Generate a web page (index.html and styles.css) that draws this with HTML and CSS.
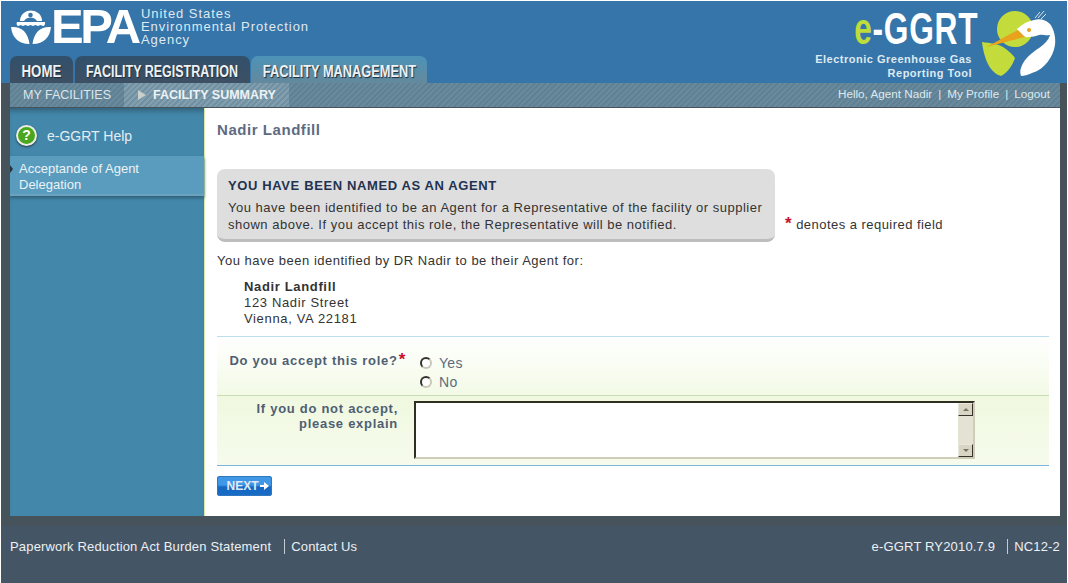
FILE: index.html

```html
<!DOCTYPE html>
<html lang="en">
<head>
  <meta charset="UTF-8" />
  <title>e-GGRT</title>
  <link rel="stylesheet" href="styles.css">
</head>
<body>
  <div class="frame">
    <header class="masthead">
      <div class="masthead-left">
        <div class="epa">
          <svg class="epa-mark" viewBox="0 0 50 44" width="50" height="44">
            <path d="M14 17a11 10.500 0 0 1 22 0z" fill="#fff"/>
            <circle cx="24.500" cy="11" r="2.300" fill="#3575a9"/>
            <path d="M18 17c2-3 4-3.500 6.500-3.500s4.500.5 6.500 3.500z" fill="#3575a9"/>
            <path d="M11 18h28c.5 2-.5 4-2 4l-2.500-1-2.500 1-2.500-1-2.500 1-2.500-1-2.500 1-2.500-1-2.500 1-2.500-1-2 1c-1.500 0-2.500-2-1.500-4z" fill="#fff"/>
            <path d="M5 23c9-1 17 4 18.500 17C12 40 6 33 5 23z" fill="#fff"/>
            <path d="M45 23c-9-1-17 4-18.500 17C38 40 44 33 45 23z" fill="#fff"/>
          </svg>
          <span class="epa-word">EPA</span>
          <span class="epa-name">United States<br>Environmental Protection<br>Agency</span>
        </div>
        <nav class="tabs">
          <a class="tab tab-home"><span>HOME</span></a>
          <a class="tab tab-reg"><span>FACILITY REGISTRATION</span></a>
          <a class="tab tab-on"><span>FACILITY MANAGEMENT</span></a>
        </nav>
      </div>
      <div class="masthead-right">
        <div class="ggrt">
          <div class="ggrt-word"><span class="ggrt-e">e</span>-GGRT</div>
          <div class="ggrt-sub">Electronic Greenhouse Gas<br>Reporting Tool</div>
        </div>
        <svg class="heron" viewBox="0 0 84 80" width="84" height="80">
          <circle cx="37" cy="25" r="18" fill="#c3dc3c"/>
          <path d="M4 38c8 1 16 2 21 5 5 3 9 7 12 11-3 8-7 14-14 18C12 69 6 55 4 38z" fill="#c3dc3c"/>
          <path d="M39 25c5-5 11-8 17-9 6-2 12 0 16 4 4 5 6 14 5 21-2 12-10 24-23 28-4 2-8 3-11 3-1-3-1-6 0-8 2-7 8-13 15-18 5-3 10-7 13-12-2-3-6-4-10-3-3 1-7 2-10 2-5 1-9-3-12-8z" fill="#fff"/>
          <path d="M62 32c4 0 8-1 10-1 0 2-2 3-4 4l-6 3z" fill="#3575a9"/>
          <path d="M8 43C18 38 30 31 40 26l7 7c-12 3-26 7-39 10z" fill="#e8a21c"/>
          <circle cx="51" cy="26" r="2" fill="#e8a21c"/>
          <path d="M57 14l5-6M60 14l6-7M63 15l5-5" stroke="#dbe7ee" stroke-width="1" fill="none"/>
        </svg>
      </div>
    </header>

    <div class="subnav">
      <div class="subnav-links">
        <a class="sublink">MY FACILITIES</a>
        <a class="sublink sublink-on"><span class="sub-arrow"></span>FACILITY SUMMARY</a>
      </div>
      <div class="userlinks">Hello, Agent Nadir<i>|</i>My Profile<i>|</i>Logout</div>
    </div>

    <div class="body-wrap">
      <aside class="sidebar">
        <div class="help">
          <span class="help-icon">?</span>
          <span>e-GGRT Help</span>
        </div>
        <a class="side-item">Acceptande of Agent Delegation</a>
      </aside>

      <main class="content">
        <h1 class="page-title">Nadir Landfill</h1>

        <div class="notice-row">
          <div class="notice">
            <h2>YOU HAVE BEEN NAMED AS AN AGENT</h2>
            <p>You have been identified to be an Agent for a Representative of the facility or supplier shown above. If you accept this role, the Representative will be notified.</p>
          </div>
          <div class="req-note"><span class="star">*</span> denotes a required field</div>
        </div>

        <p class="intro">You have been identified by DR Nadir to be their Agent for:</p>

        <div class="address">
          <b>Nadir Landfill</b><br>
          123 Nadir Street<br>
          Vienna, VA 22181
        </div>

        <form class="agent-form">
          <div class="form-row row-role">
            <div class="form-label">Do you accept this role?<span class="star star-over">*</span></div>
            <div class="radios">
              <label><input type="radio" name="accept"> Yes</label>
              <label><input type="radio" name="accept"> No</label>
            </div>
          </div>
          <div class="form-row row-explain">
            <div class="form-label">If you do not accept,<br>please explain</div>
            <div class="textbox">
              <textarea></textarea>
              <div class="scroll">
                <span class="scroll-btn"><span class="tri-up"></span></span>
                <span class="scroll-btn"><span class="tri-down"></span></span>
              </div>
            </div>
          </div>
          <button type="button" class="next">NEXT<svg viewBox="0 0 9 8" width="9" height="8"><path d="M0 3h4V0l5 4-5 4V5H0z" fill="#fff"/></svg></button>
        </form>
      </main>
    </div>

    <footer class="footer">
      <div class="foot-links"><a>Paperwork Reduction Act Burden Statement</a><a class="foot-sep foot-sep-left">Contact Us</a></div>
      <div class="foot-links"><a>e-GGRT RY2010.7.9</a><a class="foot-sep">NC12-2</a></div>
    </footer>
  </div>
</body>
</html>
```

FILE: styles.css

```css
html, body {
  margin: 0;
  padding: 0;
  background: #fff;
}
body {
  font-family: "Liberation Sans", Arial, sans-serif;
  font-size: 12px;
  color: #333;
  overflow: hidden;
}
.frame {
  width: 1066px;
  height: 582px;
  margin: 1px 0 0 1px;
  background: #46535b;
  display: flex;
  flex-direction: column;
}

/* masthead */
.masthead {
  height: 82px;
  background: #3575a9;
  display: flex;
  justify-content: space-between;
}
.masthead-left {
  display: flex;
  flex-direction: column;
  justify-content: space-between;
  padding-left: 9px;
}
.epa {
  display: flex;
  align-items: flex-start;
  padding-top: 3px;
  color: #fff;
}
.epa-mark {
  margin: 0 -5px 0 -4px;
}
.epa-word {
  font-size: 49px;
  font-weight: bold;
  line-height: 36px;
  letter-spacing: -3.5px;
  width: 90px;
  margin-top: 4px;
}
.epa-name {
  font-size: 13px;
  line-height: 13px;
  letter-spacing: 0.95px;
  color: #dfe9f1;
  margin-top: 3px;
}
.tabs {
  display: flex;
  gap: 2px;
}
.tab {
  height: 27px;
  box-sizing: border-box;
  padding-top: 4px;
  display: flex;
  align-items: center;
  justify-content: center;
  background: linear-gradient(#31506b, #3e5064);
  border-radius: 7px 7px 0 0;
  font-size: 15.6px;
  font-weight: bold;
  color: #eef2f5;
  text-shadow: 1px 1px 1px #1d2b38;
}
.tab span {
  flex-shrink: 0;
  white-space: nowrap;
  transform: scaleX(0.8);
}
.tab-home {
  width: 63px;
}
.tab-home span {
  transform: scaleX(0.85);
}
.tab-reg {
  width: 175px;
}
.tab-on {
  width: 176px;
  margin-left: -1px;
  background: linear-gradient(#4c93b8, #64899c);
}
.tab-on span {
  transform: scaleX(0.82);
}
.masthead-right {
  display: flex;
  padding-right: 5px;
}
.ggrt {
  text-align: right;
  padding-top: 8px;
}
.ggrt-word {
  font-weight: bold;
  font-size: 44px;
  line-height: 40px;
  letter-spacing: 1px;
  color: #fff;
  transform: scaleX(0.72);
  transform-origin: right center;
}
.ggrt-e {
  color: #bedc3a;
}
.ggrt-sub {
  font-size: 11px;
  font-weight: bold;
  line-height: 14px;
  letter-spacing: 0.5px;
  color: #dfe9f1;
  margin: 3px 6px 0 0;
}
.heron {
  margin-top: 3px;
}

/* second nav row */
.subnav {
  height: 24px;
  margin: 0 7px 0 9px;
  padding-right: 10px;
  background: repeating-linear-gradient(135deg, #6a8a9b 0 2px, #5f8195 2px 4px);
  border-bottom: 1px solid #46535b;
  display: flex;
  justify-content: space-between;
  align-items: center;
}
.subnav-links {
  display: flex;
  height: 100%;
}
.sublink {
  font-size: 12.5px;
  line-height: 25px;
  color: #dbe6ec;
  padding: 0 13px;
}
.sublink-on {
  font-weight: bold;
  padding: 0 13px 0 14px;
  background: repeating-linear-gradient(135deg, #839fae 0 2px, #6f91a3 2px 4px);
  display: flex;
  align-items: center;
  gap: 7px;
  color: #edf2f5;
}
.sub-arrow {
  width: 0;
  height: 0;
  border-left: 8px solid #c9cfc9;
  border-top: 5px solid transparent;
  border-bottom: 5px solid transparent;
}
.userlinks {
  font-size: 11.7px;
  color: #dde9ef;
  margin-top: -3px;
}
.userlinks i {
  font-style: normal;
  margin: 0 6px;
}

/* body */
.body-wrap {
  height: 408px;
  margin: 0 7px 10px 9px;
  display: flex;
}
.sidebar {
  width: 194px;
  background: #4387aa;
  border-right: 1px solid #d6e8a8;
  box-shadow: inset 0 6px 5px -3px #34637c;
  flex-shrink: 0;
}
.help {
  height: 48px;
  box-sizing: border-box;
  padding: 7px 0 0 6px;
  display: flex;
  align-items: center;
  gap: 10px;
  font-size: 14px;
  color: #e2edf2;
}
.help-icon {
  width: 17px;
  height: 17px;
  border-radius: 50%;
  background: #4aa61c;
  border: 2px solid #e8efe6;
  color: #fff;
  font-size: 14px;
  font-weight: bold;
  line-height: 17px;
  text-align: center;
  box-shadow: 0 1px 2px #234;
}
.side-item {
  display: block;
  position: relative;
  padding: 5px 20px 1px 9px;
  font-size: 13px;
  line-height: 16px;
  color: #eaf2f6;
  background: #5a9cbe;
  border-bottom: 2px solid #6ba2bd;
  box-shadow: 0 2px 3px #2f5f78;
}
.side-item::before {
  content: "";
  position: absolute;
  left: 0;
  top: 9px;
  border-left: 3px solid #26333c;
  border-top: 4px solid transparent;
  border-bottom: 4px solid transparent;
}
.content {
  flex: 1;
  background: #fff;
  padding: 0 11px 0 12px;
}
.page-title {
  margin: 14px 0 0;
  font-size: 15px;
  line-height: 16px;
  letter-spacing: 0.55px;
  color: #5d6b82;
}
.notice-row {
  display: flex;
  align-items: flex-end;
  margin-top: 31px;
}
.notice {
  width: 558px;
  height: 73px;
  box-sizing: border-box;
  padding: 8px 10px 0 11px;
  background: #dedede;
  border-radius: 8px;
  border-bottom: 3px solid #bdbdbd;
}
.notice h2 {
  margin: 0;
  font-size: 13px;
  line-height: 17px;
  letter-spacing: 0.62px;
  color: #1f3350;
}
.notice p {
  margin: 5px 0 0;
  font-size: 13px;
  line-height: 17px;
  letter-spacing: 0.5px;
}
.req-note {
  margin-left: 10px;
  padding-bottom: 8px;
  font-size: 13px;
  letter-spacing: 0.46px;
  color: #333;
}
.star {
  color: #c8102e;
  font-weight: bold;
  font-size: 17px;
}
.star-over {
  margin-right: -8px;
  margin-left: 1px;
}
.intro {
  margin: 11px 0 0;
  font-size: 13px;
  line-height: 16px;
  letter-spacing: 0.5px;
}
.address {
  margin: 10px 0 0 27px;
  font-size: 13px;
  line-height: 16px;
  letter-spacing: 0.65px;
}
.agent-form {
  margin-top: 9px;
}
.form-row {
  display: flex;
}
.form-label {
  width: 181px;
  font-size: 13px;
  font-weight: bold;
  line-height: 15px;
  letter-spacing: 0.72px;
  text-align: right;
  color: #4f5f73;
  flex-shrink: 0;
}
.row-role {
  height: 58px;
  border-top: 1px solid #bcdff0;
  border-bottom: 1px solid #c9dcb8;
  background: linear-gradient(#fff, #f3fae6);
}
.row-role .form-label {
  padding-top: 15px;
}
.radios {
  display: flex;
  flex-direction: column;
  gap: 3px;
  margin: 18px 0 0 22px;
  font-size: 14px;
  line-height: 16px;
  letter-spacing: 0.3px;
  color: #5b6b80;
}
.radios label {
  display: flex;
  align-items: center;
  gap: 7px;
}
.radios input {
  appearance: none;
  width: 12px;
  height: 12px;
  margin: 0;
  border-radius: 50%;
  border: 2px solid #c9c7b8;
  border-top-color: #33332c;
  border-left-color: #33332c;
  background: #fff;
}
.row-explain {
  height: 69px;
  border-bottom: 1px solid #7cb5dc;
  background: linear-gradient(#f0f8e0, #f6fbec);
}
.row-explain .form-label {
  padding-top: 5px;
}
.textbox {
  width: 561px;
  height: 58px;
  margin: 5px 0 0 16px;
  box-sizing: border-box;
  border: 2px solid #cfccb8;
  border-top-color: #2f2e22;
  border-left-color: #2f2e22;
  background: #fff;
  display: flex;
}
.textbox textarea {
  flex: 1;
  border: 0;
  padding: 0;
  resize: none;
  outline: none;
}
.scroll {
  width: 15px;
  background: #e4e2d3;
  display: flex;
  flex-direction: column;
  justify-content: space-between;
}
.scroll-btn {
  height: 13px;
  background: #d8d5c4;
  border: 1px solid #e9e7db;
  border-right-color: #33332c;
  border-bottom-color: #33332c;
  box-sizing: border-box;
  display: flex;
  align-items: center;
  justify-content: center;
}
.tri-up, .tri-down {
  width: 0;
  height: 0;
  border-left: 3px solid transparent;
  border-right: 3px solid transparent;
}
.tri-up {
  border-bottom: 3px solid #77755f;
}
.tri-down {
  border-top: 3px solid #77755f;
}
.next {
  display: flex;
  align-items: center;
  justify-content: center;
  gap: 1px;
  width: 55px;
  height: 20px;
  margin-top: 10px;
  padding: 0 0 0 6px;
  border: 0;
  border-radius: 3px;
  background: linear-gradient(#3f97e6 0 45%, #1467c2 55%, #1a6cc6);
  box-shadow: inset 0 0 0 1px #2f78c0;
  font-family: inherit;
  font-size: 12px;
  font-weight: bold;
  color: #dfeaf6;
}

/* footer */
.footer {
  flex: 1;
  background: #445566;
  display: flex;
  justify-content: space-between;
  padding: 13px 7px 0 9px;
}
.foot-links {
  font-size: 13px;
  line-height: 16px;
  letter-spacing: 0.17px;
  color: #edf0f3;
}
.foot-sep {
  margin-left: 12px;
  padding-left: 6px;
  border-left: 1px solid #c3cbd3;
}
.foot-sep-left {
  margin-left: 13px;
}
```
